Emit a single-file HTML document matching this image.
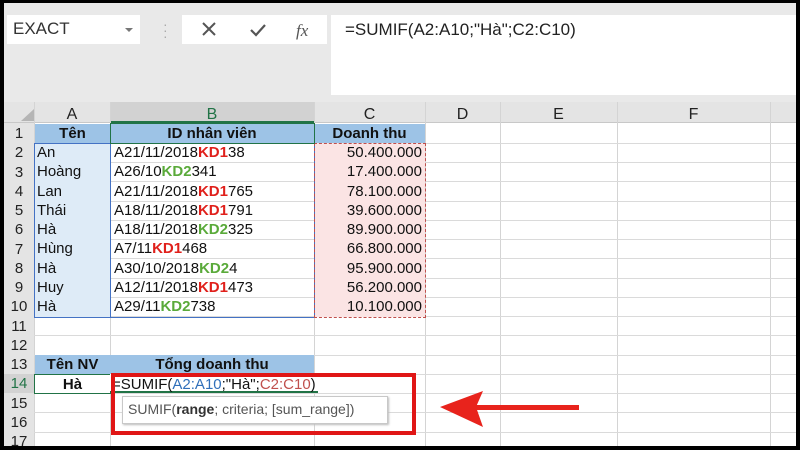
<!DOCTYPE html><html><head><meta charset="utf-8"><style>
*{margin:0;padding:0;box-sizing:border-box}
body{width:800px;height:450px;background:#000;position:relative;overflow:hidden;font-family:"Liberation Sans",Arial,sans-serif}
.a{position:absolute}
#scr{position:absolute;left:4px;top:3px;width:792px;height:443px;background:#fff;overflow:hidden}
.tb{left:0;top:0;width:792px;height:99px;background:#e9e9e9}
.cell{position:absolute;font-size:15px;line-height:19px;white-space:nowrap;color:#111}
.r{color:#e0201b;font-weight:bold}.g{color:#5aaa3a;font-weight:bold}
</style></head><body><div id="scr">
<div class="a tb"></div>
<div class="a" style="left:3px;top:12px;width:133px;height:29px;background:#fff"></div>
<div class="a" style="left:9px;top:16px;font-size:17px;color:#333">EXACT</div>
<div class="a" style="left:121px;top:25px;border-left:4px solid transparent;border-right:4px solid transparent;border-top:4px solid #777"></div>
<div class="a" style="left:159px;top:18px;color:#aaa;font-size:14px;line-height:6px">·<br>·<br>·</div>
<div class="a" style="left:178px;top:12px;width:145px;height:29px;background:#fff"></div>
<svg class="a" style="left:178px;top:12px" width="145" height="29"><path d="M21 8l12 12M33 8L21 20" stroke="#555" stroke-width="2" fill="none"/><path d="M69 15l5 5 9-10" stroke="#555" stroke-width="2.2" fill="none"/><text x="114" y="21" font-family="Liberation Serif" font-style="italic" font-size="17" fill="#555">fx</text></svg>
<div class="a" style="left:327px;top:12px;width:465px;height:80px;background:#fff"></div>
<div class="a" style="left:341px;top:17px;font-size:17px;color:#222">=SUMIF(A2:A10;"Hà";C2:C10)</div>
<div class="a" style="left:0;top:99px;width:792px;height:21px;background:#e4e4e4;border-bottom:1px solid #c8c8c8"></div>
<div class="a" style="left:106px;top:99px;width:204px;height:21px;background:#d2d2d2;border-bottom:2px solid #217346"></div>
<svg class="a" style="left:14px;top:104px" width="18" height="16"><path d="M16 2V14H3Z" fill="#b5b5b5"/></svg>
<svg class="a" style="left:0;top:99px" width="792" height="344">
<g stroke="#d4d4d4" stroke-width="1">
<line x1="30.5" y1="0" x2="30.5" y2="344"/>
<line x1="106.5" y1="0" x2="106.5" y2="344"/><line x1="310.5" y1="0" x2="310.5" y2="344"/><line x1="421.5" y1="0" x2="421.5" y2="344"/><line x1="496.5" y1="0" x2="496.5" y2="344"/><line x1="613.5" y1="0" x2="613.5" y2="344"/><line x1="766.5" y1="0" x2="766.5" y2="344"/>
</g>
<g stroke="#dadada">
<line x1="0" y1="41.5" x2="792" y2="41.5"/><line x1="0" y1="60.5" x2="792" y2="60.5"/><line x1="0" y1="79.5" x2="792" y2="79.5"/><line x1="0" y1="99.5" x2="792" y2="99.5"/><line x1="0" y1="118.5" x2="792" y2="118.5"/><line x1="0" y1="137.5" x2="792" y2="137.5"/><line x1="0" y1="156.5" x2="792" y2="156.5"/><line x1="0" y1="176.5" x2="792" y2="176.5"/><line x1="0" y1="195.5" x2="792" y2="195.5"/><line x1="0" y1="214.5" x2="792" y2="214.5"/><line x1="0" y1="233.5" x2="792" y2="233.5"/><line x1="0" y1="253.5" x2="792" y2="253.5"/><line x1="0" y1="272.5" x2="792" y2="272.5"/><line x1="0" y1="291.5" x2="792" y2="291.5"/><line x1="0" y1="310.5" x2="792" y2="310.5"/><line x1="0" y1="330.5" x2="792" y2="330.5"/>
</g></svg>
<div class="a" style="left:0;top:120px;width:30px;height:323px;background:#e4e4e4"></div>
<div class="a" style="left:0;top:371px;width:30px;height:19px;background:#d2d2d2"></div>
<div class="cell" style="left:0;top:121px;width:30px;text-align:center;font-size:15px;line-height:19.25px;color:#222">1<br>2<br>3<br>4<br>5<br>6<br>7<br>8<br>9<br>10<br>11<br>12<br>13<br><span style="color:#217346">14</span><br>15<br>16<br>17</div>
<div class="cell" style="left:30px;top:102px;width:76px;text-align:center;font-size:16px;color:#222">A</div>
<div class="cell" style="left:106px;top:102px;width:204px;text-align:center;font-size:16px;color:#217346">B</div>
<div class="cell" style="left:310px;top:102px;width:111px;text-align:center;font-size:16px;color:#222">C</div>
<div class="cell" style="left:421px;top:102px;width:75px;text-align:center;font-size:16px;color:#222">D</div>
<div class="cell" style="left:496px;top:102px;width:117px;text-align:center;font-size:16px;color:#222">E</div>
<div class="cell" style="left:613px;top:102px;width:153px;text-align:center;font-size:16px;color:#222">F</div>
<div class="a" style="left:31px;top:121px;width:390px;height:19px;background:#9dc3e6"></div>
<div class="a" style="left:31px;top:140px;width:75px;height:174px;background:#deebf7"></div>
<div class="a" style="left:311px;top:140px;width:110px;height:174px;background:#fbe4e4"></div>
<div class="a" style="left:31px;top:352px;width:279px;height:19px;background:#9dc3e6"></div>
<div class="a" style="left:30px;top:140px;width:77px;height:175px;border:1px solid #4472c4"></div>
<div class="a" style="left:106px;top:140px;width:205px;height:175px;border:1px solid #4472c4"></div>
<div class="a" style="left:310px;top:140px;width:112px;height:175px;border:1px dashed #c0504d"></div>
<div class="a" style="left:106px;top:120px;width:205px;height:21px;border:1px solid #217346"></div>
<div class="a" style="left:30px;top:371px;width:77px;height:20px;border:1px solid #217346"></div>
<div class="cell" style="left:31px;top:121px;width:75px;text-align:center;font-weight:bold">Tên</div>
<div class="cell" style="left:106px;top:121px;width:204px;text-align:center;font-weight:bold">ID nhân viên</div>
<div class="cell" style="left:310px;top:121px;width:111px;text-align:center;font-weight:bold">Doanh thu</div>
<div class="cell" style="left:33px;top:140px;line-height:19.25px">An<br>Hoàng<br>Lan<br>Thái<br>Hà<br>Hùng<br>Hà<br>Huy<br>Hà</div>
<div class="cell" style="left:110px;top:140px;line-height:19.25px">A21/11/2018<span class="r">KD1</span>38<br>A26/10<span class="g">KD2</span>341<br>A21/11/2018<span class="r">KD1</span>765<br>A18/11/2018<span class="r">KD1</span>791<br>A18/11/2018<span class="g">KD2</span>325<br>A7/11<span class="r">KD1</span>468<br>A30/10/2018<span class="g">KD2</span>4<br>A12/11/2018<span class="r">KD1</span>473<br>A29/11<span class="g">KD2</span>738</div>
<div class="cell" style="left:310px;top:140px;width:108px;text-align:right;line-height:19.25px">50.400.000<br>17.400.000<br>78.100.000<br>39.600.000<br>89.900.000<br>66.800.000<br>95.900.000<br>56.200.000<br>10.100.000</div>
<div class="cell" style="left:31px;top:352px;width:75px;text-align:center;font-weight:bold">Tên NV</div>
<div class="cell" style="left:106px;top:352px;width:204px;text-align:center;font-weight:bold">Tổng doanh thu</div>
<div class="cell" style="left:31px;top:372px;width:75px;text-align:center;font-weight:bold">Hà</div>
<div class="a" style="left:106px;top:371px;width:208px;height:19px;background:#fff;border-bottom:2px solid #217346"></div>
<div class="cell" style="left:108px;top:372px">=SUMIF(<span style="color:#2f6fba">A2:A10</span>;"Hà";<span style="color:#c0504d">C2:C10</span>)</div>
<div class="a" style="left:118px;top:393px;width:266px;height:28px;background:#fff;border:1px solid #c8c8c8;box-shadow:1px 1px 2px #bbb"></div>
<div class="cell" style="left:124px;top:397px;font-size:14px;color:#555">SUMIF(<b style="color:#333">range</b>; criteria; [sum_range])</div>
<div class="a" style="left:107px;top:370px;width:305px;height:62px;border:4px solid #e01616"></div>
<svg class="a" style="left:430px;top:380px" width="150" height="50"><path d="M145 24.5H40" stroke="#e8231c" stroke-width="5"/><path d="M6 24L49 8 42 24 49 44Z" fill="#e8231c"/></svg>
</div></body></html>
